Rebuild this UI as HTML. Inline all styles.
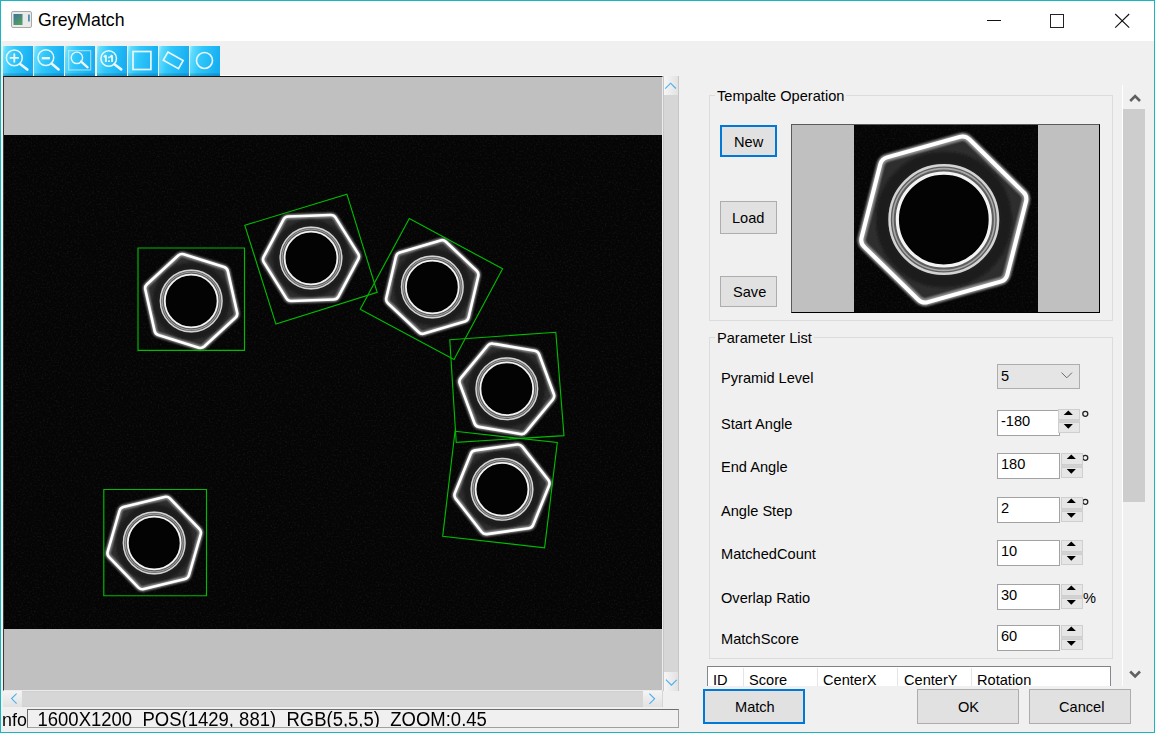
<!DOCTYPE html>
<html><head><meta charset="utf-8">
<style>
html,body{margin:0;padding:0;}
body{width:1155px;height:733px;position:relative;overflow:hidden;background:#f0f0f0;font-family:"Liberation Sans",sans-serif;color:#000;}
.abs{position:absolute;}
.t{position:absolute;white-space:nowrap;line-height:1;}
.ui{font-size:14.6px;color:#000;}
.btn{position:absolute;box-sizing:border-box;background:#e1e1e1;border:1px solid #adadad;}
.btn.def{border:2px solid #0078d7;}
.gb{position:absolute;box-sizing:border-box;border:1px solid #dcdcdc;}
.gt{position:absolute;background:#f0f0f0;padding:0 2px;}
.edit{position:absolute;box-sizing:border-box;background:#fff;border:1px solid #a2a2a2;}
.spin{position:absolute;box-sizing:border-box;background:#e6e6e6;border:1px solid #cfcfcf;}
</style></head><body>

<!-- title bar -->
<div class="abs" style="left:1px;top:1px;width:1153px;height:40px;background:#fff;"></div>
<svg class="abs" style="left:11px;top:11px" width="22" height="18" viewBox="0 0 22 18">
<defs><linearGradient id="ag" x1="0" y1="0" x2="0.6" y2="1"><stop offset="0" stop-color="#3f6fa0"/><stop offset="1" stop-color="#52a060"/></linearGradient></defs>
<rect x="0.5" y="0.5" width="20" height="16" rx="1.5" fill="#eaeaea" stroke="#a8a8a8"/>
<rect x="2.5" y="3" width="9" height="11" fill="url(#ag)"/>
<rect x="17" y="3.5" width="1.8" height="7" fill="#4a90b0"/>
</svg>
<div class="t" style="left:38px;top:11.8px;font-size:17.7px;color:#000;">GreyMatch</div>
<div class="abs" style="left:987px;top:20px;width:14px;height:1px;background:#111;"></div>
<div class="abs" style="left:1050px;top:14px;width:14px;height:14px;box-sizing:border-box;border:1px solid #222;"></div>
<svg class="abs" style="left:1114px;top:13px" width="17" height="16" viewBox="0 0 17 16"><path d="M1.2 1 L15.2 14.6 M15.2 1 L1.2 14.6" stroke="#111" stroke-width="1.1" fill="none"/></svg>

<!-- toolbar -->
<div class="abs" style="left:3px;top:75px;width:660px;height:1px;background:#fff;"></div>
<svg width="0" height="0" style="position:absolute"><defs><linearGradient id="ig" x1="0" y1="0" x2="1" y2="0.2">
<stop offset="0" stop-color="#a0f6fe"/><stop offset="0.1" stop-color="#62dcfc"/><stop offset="0.4" stop-color="#30c7fb"/><stop offset="1" stop-color="#18aff2"/></linearGradient>
<linearGradient id="ish" x1="0" y1="0" x2="0" y2="1"><stop offset="0" stop-color="#000" stop-opacity="0"/><stop offset="1" stop-color="#0a5f8a" stop-opacity="0.35"/></linearGradient></defs>
<defs><filter id="bl" x="-20%" y="-20%" width="140%" height="140%"><feGaussianBlur stdDeviation="0.45"/></filter><filter id="bl2" x="-20%" y="-20%" width="140%" height="140%"><feGaussianBlur stdDeviation="1.1"/></filter></defs></svg>
<svg class="abs" style="left:3.0px;top:46px" width="30" height="30" viewBox="0 0 30 30">
<rect x="0" y="0" width="30" height="30" fill="url(#ig)"/><rect x="0" y="26.5" width="30" height="3.5" fill="url(#ish)"/>
<g fill="none" stroke="#eaf6fa" stroke-linecap="round"><circle cx="11.3" cy="11.9" r="7.9" stroke-width="1.5"/><line x1="17.1" y1="17.9" x2="24.3" y2="23.6" stroke-width="2.6"/><line x1="7.5" y1="11.9" x2="15.1" y2="11.9" stroke-width="1.9"/><line x1="11.3" y1="8.1" x2="11.3" y2="15.7" stroke-width="1.9"/></g></svg>
<svg class="abs" style="left:34.2px;top:46px" width="30" height="30" viewBox="0 0 30 30">
<rect x="0" y="0" width="30" height="30" fill="url(#ig)"/><rect x="0" y="26.5" width="30" height="3.5" fill="url(#ish)"/>
<g fill="none" stroke="#eaf6fa" stroke-linecap="round"><circle cx="11.85" cy="11.6" r="7.9" stroke-width="1.5"/><line x1="17.5" y1="17.5" x2="24.6" y2="23.4" stroke-width="2.6"/><line x1="7.8" y1="12.2" x2="15.9" y2="12.2" stroke-width="2.4" stroke-linecap="butt"/></g></svg>
<svg class="abs" style="left:65.4px;top:46px" width="30" height="30" viewBox="0 0 30 30">
<rect x="0" y="0" width="30" height="30" fill="url(#ig)"/><rect x="0" y="26.5" width="30" height="3.5" fill="url(#ish)"/>
<g fill="none" stroke="#eaf6fa" stroke-linecap="round"><rect x="3.65" y="4.65" width="22" height="19.3" stroke-width="1.3" stroke-opacity="0.55"/><circle cx="11.9" cy="11.85" r="5.7" stroke-width="1.4"/><line x1="16.1" y1="15.6" x2="22.6" y2="21.3" stroke-width="2.4"/></g></svg>
<svg class="abs" style="left:96.6px;top:46px" width="30" height="30" viewBox="0 0 30 30">
<rect x="0" y="0" width="30" height="30" fill="url(#ig)"/><rect x="0" y="26.5" width="30" height="3.5" fill="url(#ish)"/>
<g fill="none" stroke="#eaf6fa" stroke-linecap="round"><circle cx="11.7" cy="12.5" r="7.8" stroke-width="1.5"/><line x1="17.4" y1="18.2" x2="24.2" y2="23.4" stroke-width="2.6"/><path d="M8.9 9.2 V16 M6.9 11.2 L8.9 9.2 M15.1 9.2 V16 M13.1 11.2 L15.1 9.2" stroke-width="1.9" stroke-linecap="butt"/><rect x="11.1" y="10.6" width="1.7" height="1.7" fill="#eaf6fa" stroke="none"/><rect x="11.1" y="14.3" width="1.7" height="1.7" fill="#eaf6fa" stroke="none"/></g></svg>
<svg class="abs" style="left:127.8px;top:46px" width="30" height="30" viewBox="0 0 30 30">
<rect x="0" y="0" width="30" height="30" fill="url(#ig)"/><rect x="0" y="26.5" width="30" height="3.5" fill="url(#ish)"/>
<g fill="none" stroke="#eaf6fa" stroke-linecap="round"><rect x="5.0" y="5.5" width="17.9" height="18" stroke-width="1.7" stroke-linecap="butt"/></g></svg>
<svg class="abs" style="left:159.0px;top:46px" width="30" height="30" viewBox="0 0 30 30">
<rect x="0" y="0" width="30" height="30" fill="url(#ig)"/><rect x="0" y="26.5" width="30" height="3.5" fill="url(#ish)"/>
<g fill="none" stroke="#eaf6fa" stroke-linecap="round"><polygon points="8.9,6.1 24.1,14.6 19.5,22.7 4.3,14.2" stroke-width="1.7" stroke-linejoin="miter"/></g></svg>
<svg class="abs" style="left:190.1px;top:46px" width="30" height="30" viewBox="0 0 30 30">
<rect x="0" y="0" width="30" height="30" fill="url(#ig)"/><rect x="0" y="26.5" width="30" height="3.5" fill="url(#ish)"/>
<g fill="none" stroke="#eaf6fa" stroke-linecap="round"><circle cx="14.5" cy="14.5" r="8.0" stroke-width="1.6"/></g></svg>

<!-- image view -->
<div class="abs" style="left:3px;top:76px;width:660px;height:615px;box-sizing:border-box;background:#c0c0c0;border-top:1px solid #141414;border-left:1px solid #3a3a3a;border-right:1px solid #ececec;border-bottom:1px solid #ececec;"></div>
<svg class="abs" style="left:4px;top:135px" width="658" height="494" viewBox="4 135 658 494">
<filter id="nz" x="0" y="0" width="100%" height="100%"><feTurbulence type="fractalNoise" baseFrequency="0.55" numOctaves="2" seed="7"/><feColorMatrix type="matrix" values="0 0 0 0 1  0 0 0 0 1  0 0 0 0 1  1.6 0 0 0 -0.78"/></filter>
<rect x="4" y="135" width="658" height="494" fill="#050505"/>
<rect x="4" y="135" width="658" height="494" filter="url(#nz)" opacity="0.09"/>
<g>
<path d="M237.1 312.5 Q237.8 315.6 235.4 317.8 L204.2 346.5 Q201.8 348.6 198.8 347.7 L158.3 335.0 Q155.3 334.0 154.6 330.9 L145.3 289.5 Q144.6 286.4 147.0 284.2 L178.2 255.5 Q180.6 253.4 183.6 254.3 L224.1 267.0 Q227.1 268.0 227.8 271.1 Z" fill="#2e2e2e" stroke="#999999" stroke-width="4.60" stroke-linejoin="round" filter="url(#bl2)"/>
<path d="M237.1 312.5 Q237.8 315.6 235.4 317.8 L204.2 346.5 Q201.8 348.6 198.8 347.7 L158.3 335.0 Q155.3 334.0 154.6 330.9 L145.3 289.5 Q144.6 286.4 147.0 284.2 L178.2 255.5 Q180.6 253.4 183.6 254.3 L224.1 267.0 Q227.1 268.0 227.8 271.1 Z" fill="none" stroke="#ffffff" stroke-width="2.60" stroke-linejoin="round" filter="url(#bl)"/>
<circle cx="191.2" cy="301.0" r="35.00" fill="none" stroke="#1c1c1c" stroke-width="7.00" filter="url(#bl2)"/>
<circle cx="191.2" cy="301.0" r="28.60" fill="none" stroke="#5e5e5e" stroke-width="5.80"/>
<circle cx="191.2" cy="301.0" r="30.80" fill="none" stroke="#d4d4d4" stroke-width="1.40"/>
<circle cx="191.2" cy="301.0" r="28.90" fill="none" stroke="#a8a8a8" stroke-width="0.90"/>
<circle cx="191.2" cy="301.0" r="26.40" fill="#030303" stroke="#f4f4f4" stroke-width="1.80"/>
</g>
<g>
<path d="M358.1 253.6 Q359.8 256.3 358.3 259.1 L338.4 296.6 Q336.9 299.4 333.7 299.5 L291.3 301.0 Q288.1 301.1 286.4 298.4 L263.9 262.4 Q262.2 259.7 263.7 256.9 L283.6 219.4 Q285.1 216.6 288.3 216.5 L330.7 215.0 Q333.9 214.9 335.6 217.6 Z" fill="#2e2e2e" stroke="#999999" stroke-width="4.60" stroke-linejoin="round" filter="url(#bl2)"/>
<path d="M358.1 253.6 Q359.8 256.3 358.3 259.1 L338.4 296.6 Q336.9 299.4 333.7 299.5 L291.3 301.0 Q288.1 301.1 286.4 298.4 L263.9 262.4 Q262.2 259.7 263.7 256.9 L283.6 219.4 Q285.1 216.6 288.3 216.5 L330.7 215.0 Q333.9 214.9 335.6 217.6 Z" fill="none" stroke="#ffffff" stroke-width="2.60" stroke-linejoin="round" filter="url(#bl)"/>
<circle cx="311.0" cy="258.0" r="35.00" fill="none" stroke="#1c1c1c" stroke-width="7.00" filter="url(#bl2)"/>
<circle cx="311.0" cy="258.0" r="28.60" fill="none" stroke="#5e5e5e" stroke-width="5.80"/>
<circle cx="311.0" cy="258.0" r="30.80" fill="none" stroke="#d4d4d4" stroke-width="1.40"/>
<circle cx="311.0" cy="258.0" r="28.90" fill="none" stroke="#a8a8a8" stroke-width="0.90"/>
<circle cx="311.0" cy="258.0" r="26.40" fill="#030303" stroke="#f4f4f4" stroke-width="1.80"/>
</g>
<g>
<path d="M468.6 317.4 Q467.8 320.5 464.8 321.4 L424.1 333.6 Q421.1 334.5 418.7 332.3 L387.9 303.2 Q385.6 301.0 386.3 297.9 L396.0 256.6 Q396.8 253.5 399.8 252.6 L440.5 240.4 Q443.5 239.5 445.9 241.7 L476.7 270.8 Q479.0 273.0 478.3 276.1 Z" fill="#2e2e2e" stroke="#999999" stroke-width="4.60" stroke-linejoin="round" filter="url(#bl2)"/>
<path d="M468.6 317.4 Q467.8 320.5 464.8 321.4 L424.1 333.6 Q421.1 334.5 418.7 332.3 L387.9 303.2 Q385.6 301.0 386.3 297.9 L396.0 256.6 Q396.8 253.5 399.8 252.6 L440.5 240.4 Q443.5 239.5 445.9 241.7 L476.7 270.8 Q479.0 273.0 478.3 276.1 Z" fill="none" stroke="#ffffff" stroke-width="2.60" stroke-linejoin="round" filter="url(#bl)"/>
<circle cx="432.3" cy="287.0" r="35.00" fill="none" stroke="#1c1c1c" stroke-width="7.00" filter="url(#bl2)"/>
<circle cx="432.3" cy="287.0" r="28.60" fill="none" stroke="#5e5e5e" stroke-width="5.80"/>
<circle cx="432.3" cy="287.0" r="30.80" fill="none" stroke="#d4d4d4" stroke-width="1.40"/>
<circle cx="432.3" cy="287.0" r="28.90" fill="none" stroke="#a8a8a8" stroke-width="0.90"/>
<circle cx="432.3" cy="287.0" r="26.40" fill="#030303" stroke="#f4f4f4" stroke-width="1.80"/>
</g>
<g>
<path d="M553.8 394.0 Q554.9 397.0 552.9 399.5 L525.8 432.1 Q523.7 434.6 520.6 434.0 L478.8 426.9 Q475.6 426.3 474.5 423.3 L459.8 383.6 Q458.7 380.6 460.7 378.1 L487.8 345.5 Q489.9 343.0 493.0 343.6 L534.8 350.7 Q538.0 351.3 539.1 354.3 Z" fill="#2e2e2e" stroke="#999999" stroke-width="4.60" stroke-linejoin="round" filter="url(#bl2)"/>
<path d="M553.8 394.0 Q554.9 397.0 552.9 399.5 L525.8 432.1 Q523.7 434.6 520.6 434.0 L478.8 426.9 Q475.6 426.3 474.5 423.3 L459.8 383.6 Q458.7 380.6 460.7 378.1 L487.8 345.5 Q489.9 343.0 493.0 343.6 L534.8 350.7 Q538.0 351.3 539.1 354.3 Z" fill="none" stroke="#ffffff" stroke-width="2.60" stroke-linejoin="round" filter="url(#bl)"/>
<circle cx="506.8" cy="388.8" r="35.00" fill="none" stroke="#1c1c1c" stroke-width="7.00" filter="url(#bl2)"/>
<circle cx="506.8" cy="388.8" r="28.60" fill="none" stroke="#5e5e5e" stroke-width="5.80"/>
<circle cx="506.8" cy="388.8" r="30.80" fill="none" stroke="#d4d4d4" stroke-width="1.40"/>
<circle cx="506.8" cy="388.8" r="28.90" fill="none" stroke="#a8a8a8" stroke-width="0.90"/>
<circle cx="506.8" cy="388.8" r="26.40" fill="#030303" stroke="#f4f4f4" stroke-width="1.80"/>
</g>
<g>
<path d="M548.4 480.0 Q550.3 482.5 549.1 485.5 L533.2 524.8 Q532.0 527.8 528.9 528.2 L486.9 534.1 Q483.7 534.5 481.7 532.0 L455.6 498.6 Q453.7 496.1 454.9 493.1 L470.8 453.8 Q472.0 450.8 475.1 450.4 L517.1 444.5 Q520.3 444.1 522.3 446.6 Z" fill="#2e2e2e" stroke="#999999" stroke-width="4.60" stroke-linejoin="round" filter="url(#bl2)"/>
<path d="M548.4 480.0 Q550.3 482.5 549.1 485.5 L533.2 524.8 Q532.0 527.8 528.9 528.2 L486.9 534.1 Q483.7 534.5 481.7 532.0 L455.6 498.6 Q453.7 496.1 454.9 493.1 L470.8 453.8 Q472.0 450.8 475.1 450.4 L517.1 444.5 Q520.3 444.1 522.3 446.6 Z" fill="none" stroke="#ffffff" stroke-width="2.60" stroke-linejoin="round" filter="url(#bl)"/>
<circle cx="502.0" cy="489.3" r="35.00" fill="none" stroke="#1c1c1c" stroke-width="7.00" filter="url(#bl2)"/>
<circle cx="502.0" cy="489.3" r="28.60" fill="none" stroke="#5e5e5e" stroke-width="5.80"/>
<circle cx="502.0" cy="489.3" r="30.80" fill="none" stroke="#d4d4d4" stroke-width="1.40"/>
<circle cx="502.0" cy="489.3" r="28.90" fill="none" stroke="#a8a8a8" stroke-width="0.90"/>
<circle cx="502.0" cy="489.3" r="26.40" fill="#030303" stroke="#f4f4f4" stroke-width="1.80"/>
</g>
<g>
<path d="M199.3 528.9 Q201.6 531.2 200.7 534.3 L189.0 575.0 Q188.1 578.1 185.0 578.9 L143.9 589.1 Q140.7 589.9 138.5 587.6 L109.1 557.1 Q106.8 554.8 107.7 551.7 L119.4 511.0 Q120.3 507.9 123.4 507.1 L164.5 496.9 Q167.7 496.1 169.9 498.4 Z" fill="#2e2e2e" stroke="#999999" stroke-width="4.60" stroke-linejoin="round" filter="url(#bl2)"/>
<path d="M199.3 528.9 Q201.6 531.2 200.7 534.3 L189.0 575.0 Q188.1 578.1 185.0 578.9 L143.9 589.1 Q140.7 589.9 138.5 587.6 L109.1 557.1 Q106.8 554.8 107.7 551.7 L119.4 511.0 Q120.3 507.9 123.4 507.1 L164.5 496.9 Q167.7 496.1 169.9 498.4 Z" fill="none" stroke="#ffffff" stroke-width="2.60" stroke-linejoin="round" filter="url(#bl)"/>
<circle cx="154.2" cy="543.0" r="35.00" fill="none" stroke="#1c1c1c" stroke-width="7.00" filter="url(#bl2)"/>
<circle cx="154.2" cy="543.0" r="28.60" fill="none" stroke="#5e5e5e" stroke-width="5.80"/>
<circle cx="154.2" cy="543.0" r="30.80" fill="none" stroke="#d4d4d4" stroke-width="1.40"/>
<circle cx="154.2" cy="543.0" r="28.90" fill="none" stroke="#a8a8a8" stroke-width="0.90"/>
<circle cx="154.2" cy="543.0" r="26.40" fill="#030303" stroke="#f4f4f4" stroke-width="1.80"/>
</g>
<polygon points="138,248 244.5,248 244.5,350.3 138,350.3" fill="none" stroke="#00bb00" stroke-width="1.15"/>
<polygon points="244.8,225.3 346.9,194.2 377.2,292.4 275.9,324.1" fill="none" stroke="#00bb00" stroke-width="1.15"/>
<polygon points="409.3,218.6 502.6,268.8 454.0,359.4 360.2,309.2" fill="none" stroke="#00bb00" stroke-width="1.15"/>
<polygon points="449.8,339.8 555.8,332.3 564.0,435.6 456.2,442.4" fill="none" stroke="#00bb00" stroke-width="1.15"/>
<polygon points="455.0,431.3 557.3,442.5 544.6,547.9 442.7,536.2" fill="none" stroke="#00bb00" stroke-width="1.15"/>
<polygon points="103.8,489.5 206.5,489.5 206.5,595.7 103.8,595.7" fill="none" stroke="#00bb00" stroke-width="1.15"/>
</svg>

<!-- v scrollbar -->
<div class="abs" style="left:663px;top:76px;width:16px;height:615px;box-sizing:border-box;background:#d6d6d6;border-left:1px solid #c6c6c6;border-right:1px solid #c6c6c6;"></div>
<div class="abs" style="left:664px;top:76px;width:14px;height:19px;background:linear-gradient(90deg,#f6f6f6,#e2e2e2);"></div>
<svg class="abs" style="left:663px;top:76px" width="16" height="19"><path d="M2.2 12.6 L7.6 7.2 L12.9 12.5" fill="none" stroke="#4aaef0" stroke-width="1.1"/></svg>
<div class="abs" style="left:664px;top:672px;width:14px;height:19px;background:linear-gradient(90deg,#f6f6f6,#e2e2e2);"></div>
<svg class="abs" style="left:663px;top:672px" width="16" height="19"><path d="M2.9 7.6 L8.4 13.1 L13.7 7.8" fill="none" stroke="#4aaef0" stroke-width="1.1"/></svg>

<!-- h scrollbar -->
<div class="abs" style="left:3px;top:691px;width:660px;height:16px;box-sizing:border-box;background:#d6d6d6;border-top:1px solid #d0d0d0;border-bottom:1px solid #d0d0d0;"></div>
<div class="abs" style="left:3px;top:691px;width:19px;height:16px;background:linear-gradient(180deg,#f4f4f4,#e2e2e2);"></div>
<svg class="abs" style="left:3px;top:691px" width="19" height="16"><path d="M13.6 2.6 L8.6 7.6 L13.6 12.6" fill="none" stroke="#4aaef0" stroke-width="1.1"/></svg>
<div class="abs" style="left:643px;top:691px;width:19px;height:16px;background:linear-gradient(180deg,#f4f4f4,#e2e2e2);"></div>
<svg class="abs" style="left:643px;top:691px" width="19" height="16"><path d="M6.4 2.6 L11.6 7.8 L6.4 12.8" fill="none" stroke="#4aaef0" stroke-width="1.1"/></svg>

<!-- info -->
<div class="t" style="left:2.3px;top:711.3px;font-size:18.6px;color:#000;transform:scale(0.96,1);transform-origin:0 0;">nfo</div>
<div class="abs" style="left:27px;top:709px;width:652px;height:19px;box-sizing:border-box;border:1px solid #6e6e6e;border-right-color:#a0a0a0;border-bottom-color:#a0a0a0;overflow:hidden;">
<div class="t" style="left:9.5px;top:0.1px;font-size:18.5px;color:#000;transform:scale(1,1.045);transform-origin:0 0;">1600X1200&nbsp;&nbsp;POS(1429,&nbsp;881)&nbsp;&nbsp;RGB(5,5,5)&nbsp;&nbsp;ZOOM:0.45</div>
</div>

<!-- right panel -->
<div class="gb" style="left:709px;top:95px;width:404px;height:226px;"></div>
<div class="gt ui" style="left:715px;top:89px;line-height:15px;">Tempalte Operation</div>
<div class="btn def" style="left:720px;top:125px;width:57px;height:32px;"><div class="t ui" style="left:12px;top:8px;">New</div></div>
<div class="btn" style="left:720px;top:201px;width:57px;height:33px;"><div class="t ui" style="left:11px;top:9px;">Load</div></div>
<div class="btn" style="left:720px;top:276px;width:57px;height:31px;"><div class="t ui" style="left:12px;top:8px;">Save</div></div>
<div class="abs" style="left:791px;top:124px;width:309px;height:189px;box-sizing:border-box;background:#c0c0c0;border:1px solid #000;border-top-color:#5a5a5a;border-left-color:#5a5a5a;"></div>
<svg class="abs" style="left:854px;top:125px" width="184" height="187" viewBox="854 125 184 187">
<rect x="854" y="125" width="184" height="187" fill="#050505"/>
<rect x="854" y="125" width="184" height="187" filter="url(#nz)" opacity="0.09"/>
<g>
<path d="M1023.3 192.1 Q1027.4 196.0 1026.0 201.5 L1007.3 274.7 Q1005.9 280.1 1000.5 281.6 L927.8 302.1 Q922.4 303.6 918.3 299.7 L864.3 246.9 Q860.2 243.0 861.6 237.5 L880.3 164.3 Q881.7 158.9 887.1 157.4 L959.8 136.9 Q965.2 135.4 969.3 139.3 Z" fill="#2e2e2e" stroke="#999999" stroke-width="7.23" stroke-linejoin="round" filter="url(#bl2)"/>
<path d="M1023.3 192.1 Q1027.4 196.0 1026.0 201.5 L1007.3 274.7 Q1005.9 280.1 1000.5 281.6 L927.8 302.1 Q922.4 303.6 918.3 299.7 L864.3 246.9 Q860.2 243.0 861.6 237.5 L880.3 164.3 Q881.7 158.9 887.1 157.4 L959.8 136.9 Q965.2 135.4 969.3 139.3 Z" fill="none" stroke="#ffffff" stroke-width="4.09" stroke-linejoin="round" filter="url(#bl)"/>
<circle cx="943.8" cy="219.5" r="61.60" fill="none" stroke="#1c1c1c" stroke-width="12.32" filter="url(#bl2)"/>
<circle cx="943.8" cy="219.5" r="50.34" fill="none" stroke="#5e5e5e" stroke-width="10.21"/>
<circle cx="943.8" cy="219.5" r="54.21" fill="none" stroke="#d4d4d4" stroke-width="2.46"/>
<circle cx="943.8" cy="219.5" r="50.86" fill="none" stroke="#a8a8a8" stroke-width="1.58"/>
<circle cx="943.8" cy="219.5" r="46.46" fill="#030303" stroke="#f4f4f4" stroke-width="3.17"/>
</g>
</svg>

<div class="gb" style="left:709px;top:337px;width:404px;height:322px;"></div>
<div class="gt ui" style="left:715px;top:331px;line-height:15px;">Parameter List</div>

<div class="t ui" style="left:721px;top:371px;">Pyramid Level</div>
<div class="t ui" style="left:721px;top:417px;">Start Angle</div>
<div class="t ui" style="left:721px;top:460px;">End Angle</div>
<div class="t ui" style="left:721px;top:504px;">Angle Step</div>
<div class="t ui" style="left:721px;top:547px;">MatchedCount</div>
<div class="t ui" style="left:721px;top:591px;">Overlap Ratio</div>
<div class="t ui" style="left:721px;top:632px;">MatchScore</div>

<div class="abs" style="left:997px;top:364px;width:83px;height:25px;box-sizing:border-box;background:#e5e5e5;border:1px solid #adadad;"></div>
<div class="t ui" style="left:1001px;top:369px;">5</div>
<svg class="abs" style="left:1060px;top:370px" width="14" height="10"><path d="M1.5 2.6 L6.8 7.8 L12 2.6" fill="none" stroke="#6a6a6a" stroke-width="1"/></svg>

<div class="edit" style="left:997px;top:410px;width:63px;height:26px;"></div>
<div class="t ui" style="left:1001px;top:414.2px;">-180</div>
<div class="abs" style="left:1058px;top:409px;width:22px;height:24px;background:#d2d2d2;"></div>
<div class="spin" style="left:1058px;top:409px;width:22px;height:11px;"></div>
<div class="spin" style="left:1058px;top:421.5px;width:22px;height:11.5px;"></div>
<svg class="abs" style="left:1058px;top:409px" width="22" height="25" viewBox="1058 409 22 25"><polygon points="1063.7,414.9 1072.8999999999999,414.9 1068.3,410.4" fill="#000"/><polygon points="1063.7,424.0 1072.8999999999999,424.0 1068.3,428.8" fill="#000"/></svg>
<svg class="abs" style="left:1080px;top:409px" width="10" height="10"><circle cx="5.2999999999999545" cy="4.8" r="2.5" fill="none" stroke="#222" stroke-width="1.3"/></svg>
<div class="edit" style="left:997px;top:453px;width:63px;height:26px;"></div>
<div class="t ui" style="left:1001px;top:457.2px;">180</div>
<div class="abs" style="left:1061px;top:453px;width:22px;height:25px;background:#d2d2d2;"></div>
<div class="spin" style="left:1061px;top:453px;width:22px;height:12px;"></div>
<div class="spin" style="left:1061px;top:466.5px;width:22px;height:11.5px;"></div>
<svg class="abs" style="left:1061px;top:453px" width="22" height="26" viewBox="1061 453 22 26"><polygon points="1066.7,458.9 1075.8999999999999,458.9 1071.3,454.4" fill="#000"/><polygon points="1066.7,469.0 1075.8999999999999,469.0 1071.3,473.8" fill="#000"/></svg>
<svg class="abs" style="left:1083px;top:453px" width="10" height="10"><circle cx="2.2999999999999545" cy="4.8" r="2.5" fill="none" stroke="#222" stroke-width="1.3"/></svg>
<div class="edit" style="left:997px;top:497px;width:63px;height:26px;"></div>
<div class="t ui" style="left:1001px;top:501.2px;">2</div>
<div class="abs" style="left:1061px;top:497px;width:22px;height:25px;background:#d2d2d2;"></div>
<div class="spin" style="left:1061px;top:497px;width:22px;height:12px;"></div>
<div class="spin" style="left:1061px;top:510.5px;width:22px;height:11.5px;"></div>
<svg class="abs" style="left:1061px;top:497px" width="22" height="26" viewBox="1061 497 22 26"><polygon points="1066.7,502.9 1075.8999999999999,502.9 1071.3,498.4" fill="#000"/><polygon points="1066.7,513.0 1075.8999999999999,513.0 1071.3,517.8" fill="#000"/></svg>
<svg class="abs" style="left:1083px;top:497px" width="10" height="10"><circle cx="2.2999999999999545" cy="4.8" r="2.5" fill="none" stroke="#222" stroke-width="1.3"/></svg>
<div class="edit" style="left:997px;top:540px;width:63px;height:26px;"></div>
<div class="t ui" style="left:1001px;top:544.2px;">10</div>
<div class="abs" style="left:1061px;top:540px;width:22px;height:25px;background:#d2d2d2;"></div>
<div class="spin" style="left:1061px;top:540px;width:22px;height:12px;"></div>
<div class="spin" style="left:1061px;top:553.5px;width:22px;height:11.5px;"></div>
<svg class="abs" style="left:1061px;top:540px" width="22" height="26" viewBox="1061 540 22 26"><polygon points="1066.7,545.9 1075.8999999999999,545.9 1071.3,541.4" fill="#000"/><polygon points="1066.7,556.0 1075.8999999999999,556.0 1071.3,560.8" fill="#000"/></svg>
<div class="edit" style="left:997px;top:584px;width:63px;height:26px;"></div>
<div class="t ui" style="left:1001px;top:588.2px;">30</div>
<div class="abs" style="left:1061px;top:584px;width:22px;height:25px;background:#d2d2d2;"></div>
<div class="spin" style="left:1061px;top:584px;width:22px;height:12px;"></div>
<div class="spin" style="left:1061px;top:597.5px;width:22px;height:11.5px;"></div>
<svg class="abs" style="left:1061px;top:584px" width="22" height="26" viewBox="1061 584 22 26"><polygon points="1066.7,589.9 1075.8999999999999,589.9 1071.3,585.4" fill="#000"/><polygon points="1066.7,600.0 1075.8999999999999,600.0 1071.3,604.8" fill="#000"/></svg>
<div class="t ui" style="left:1083px;top:591px;">%</div>
<div class="edit" style="left:997px;top:625px;width:63px;height:26px;"></div>
<div class="t ui" style="left:1001px;top:629.2px;">60</div>
<div class="abs" style="left:1061px;top:625px;width:22px;height:25px;background:#d2d2d2;"></div>
<div class="spin" style="left:1061px;top:625px;width:22px;height:12px;"></div>
<div class="spin" style="left:1061px;top:638.5px;width:22px;height:11.5px;"></div>
<svg class="abs" style="left:1061px;top:625px" width="22" height="26" viewBox="1061 625 22 26"><polygon points="1066.7,630.9 1075.8999999999999,630.9 1071.3,626.4" fill="#000"/><polygon points="1066.7,641.0 1075.8999999999999,641.0 1071.3,645.8" fill="#000"/></svg>

<!-- table -->
<div class="abs" style="left:707px;top:666px;width:404px;height:20px;box-sizing:border-box;background:#fff;border-top:1px solid #828282;border-left:1px solid #828790;border-right:1px solid #828790;overflow:hidden;">
</div>
<div class="abs" style="left:743px;top:668px;width:1px;height:18px;background:#e5e5e5;"></div>
<div class="abs" style="left:817px;top:668px;width:1px;height:18px;background:#e5e5e5;"></div>
<div class="abs" style="left:897px;top:668px;width:1px;height:18px;background:#e5e5e5;"></div>
<div class="abs" style="left:971px;top:668px;width:1px;height:18px;background:#e5e5e5;"></div>
<div class="abs" style="left:707px;top:666px;width:404px;height:20px;overflow:hidden;">
<div class="t ui" style="left:6px;top:7px;">ID</div>
<div class="t ui" style="left:42px;top:7px;">Score</div>
<div class="t ui" style="left:116px;top:7px;">CenterX</div>
<div class="t ui" style="left:197px;top:7px;">CenterY</div>
<div class="t ui" style="left:270px;top:7px;">Rotation</div>
</div>

<!-- right scrollbar -->
<div class="abs" style="left:1122px;top:85px;width:1px;height:601px;background:#fff;"></div>
<svg class="abs" style="left:1126px;top:90px" width="18" height="16"><path d="M4.2 11 L9.1 6 L14 11" fill="none" stroke="#606060" stroke-width="2.6"/></svg>
<div class="abs" style="left:1123px;top:109px;width:22px;height:393px;background:#cdcdcd;"></div>
<svg class="abs" style="left:1126px;top:666px" width="18" height="16"><path d="M4.2 5.5 L9.1 10.5 L14 5.5" fill="none" stroke="#606060" stroke-width="2.6"/></svg>

<!-- bottom buttons -->
<div class="btn def" style="left:703px;top:689px;width:102px;height:35px;"><div class="t ui" style="left:30px;top:9px;">Match</div></div>
<div class="btn" style="left:917px;top:689px;width:102px;height:35px;"><div class="t ui" style="left:40px;top:10px;">OK</div></div>
<div class="btn" style="left:1029px;top:689px;width:102px;height:35px;"><div class="t ui" style="left:29px;top:10px;">Cancel</div></div>

<!-- window border -->
<div class="abs" style="left:0;top:0;width:1155px;height:733px;box-sizing:border-box;border:1px solid #17b6c0;z-index:50;pointer-events:none;"></div>
</body></html>
